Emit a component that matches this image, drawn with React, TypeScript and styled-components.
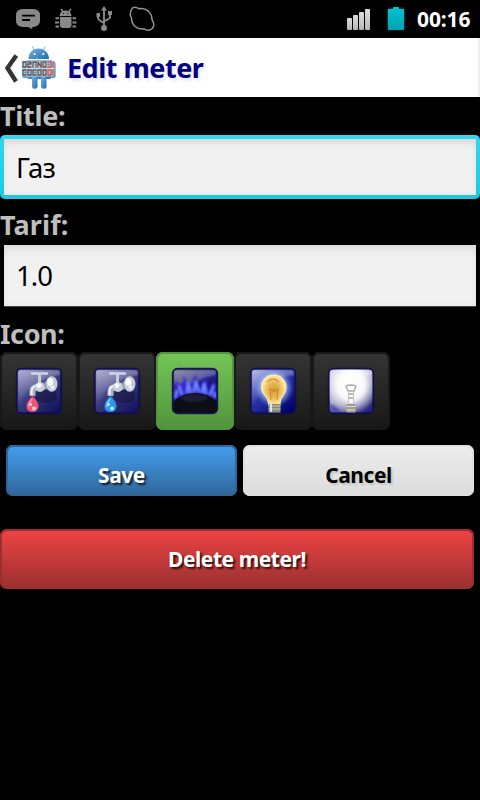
import React from "react";
import styled, { createGlobalStyle, css } from "styled-components";

const GlobalStyle = createGlobalStyle`
  * { box-sizing: border-box; }
  html, body { margin: 0; background: #000; }
  body { font-family: "Noto Sans", "Open Sans", sans-serif; overflow: hidden; }
`;

const Screen = styled.main`
  width: 480px;
  height: 800px;
  background: #000;
  display: flex;
  flex-direction: column;
  align-items: flex-start;
  overflow: hidden;
`;

const StatusBar = styled.header`
  width: 100%;
  height: 38px;
  flex: none;
  display: flex;
  justify-content: space-between;
`;

const StatusIcons = styled.svg`
  display: block;
  flex: none;
`;

const StatusRight = styled.div`
  display: flex;
  padding-right: 9px;
`;

const Clock = styled.time`
  font-size: 21px;
  font-weight: 700;
  line-height: 38px;
  color: #fff;
  width: 54px;
  letter-spacing: -0.1px;
  white-space: nowrap;
`;

const ActionBar = styled.div`
  width: 100%;
  height: 59px;
  flex: none;
  display: flex;
  background: linear-gradient(to right, #fff 478px, #f0f0f0 478px);
`;

const ActionTitle = styled.h1`
  margin: 0 0 0 5px;
  font-size: 27px;
  font-weight: 700;
  letter-spacing: -0.5px;
  line-height: 60px;
  color: #000080;
  text-shadow: 2px 3px 3px rgba(120, 120, 220, 0.18);
  white-space: nowrap;
`;

const Form = styled.form`
  width: 100%;
  display: flex;
  flex-direction: column;
`;

const FieldLabel = styled.label<{ $tracking?: number; $height?: number }>`
  height: ${(p) => p.$height ?? 38}px;
  font-size: 27px;
  font-weight: 700;
  letter-spacing: ${(p) => p.$tracking ?? 0}px;
  line-height: 38px;
  color: #bebebe;
  white-space: nowrap;
`;

const FieldFrame = styled.div<{ $focused?: boolean }>`
  height: 64px;
  padding: ${(p) => (p.$focused ? 4 : 1)}px 4px;
  margin-bottom: 7px;
  border-radius: 5px;
  background: ${(p) => (p.$focused ? "linear-gradient(#38d5ee, #18cbdd)" : "#000")};
`;

const FieldInput = styled.input<{ $tall?: boolean }>`
  display: block;
  width: 100%;
  height: ${(p) => (p.$tall ? 62 : 56)}px;
  border: 0;
  border-bottom: ${(p) => (p.$tall ? "1px solid #444" : "0")};
  border-radius: 0;
  outline: 0;
  padding: 0 12px;
  background: #f1f1f1;
  box-shadow: inset 0 8px 9px -5px rgba(0, 0, 0, 0.1), inset 0 0 7px rgba(0, 0, 0, 0.05);
  color: #000;
  font-family: "Noto Sans", sans-serif;
  font-size: 27.500px;
  letter-spacing: -0.9px;
`;

const IconRow = styled.div`
  display: flex;
  height: 78px;
`;

const surface = css`
  border: 0;
  border-radius: 7px;
  padding: 0;
`;

const Tile = styled.button<{ $selected?: boolean }>`
  ${surface}
  width: 78px;
  height: 78px;
  display: grid;
  place-items: center;
  background: ${(p) => (p.$selected ? "linear-gradient(#74c657, #51933c)" : "linear-gradient(#353535, #171717)")};
  box-shadow: inset 0 0 0 2px ${(p) => (p.$selected ? "#519440" : "#181818")};
`;

const Actions = styled.div`
  display: flex;
  gap: 6px;
  padding: 15px 6px 0;
`;

const tones = {
  blue: { fill: "linear-gradient(#449def, #2f6699)", edge: "#2f6699", text: "#fff", shadow: "rgba(0,0,0,.75)" },
  grey: { fill: "linear-gradient(#ededed, #dcdcdc)", edge: "#e0e0e0", text: "#000", shadow: "rgba(0,0,0,.12)" },
  red: { fill: "linear-gradient(#ef4444, #992f2f)", edge: "#992f2f", text: "#fff", shadow: "rgba(0,0,0,.75)" },
};

const Button = styled.button<{ $tone: keyof typeof tones; $wide?: boolean }>`
  ${surface}
  width: ${(p) => (p.$wide ? 474 : 231)}px;
  height: ${(p) => (p.$wide ? 60 : 51)}px;
  margin-top: ${(p) => (p.$wide ? 33 : 0)}px;
  padding: ${(p) => (p.$wide ? "0 0 1px" : "9px 0 0")};
  background: ${(p) => tones[p.$tone].fill};
  box-shadow: inset 0 0 0 2px ${(p) => tones[p.$tone].edge};
  color: ${(p) => tones[p.$tone].text};
  text-shadow: 2px 2px 2px ${(p) => tones[p.$tone].shadow};
  font: 700 21px "Noto Sans", sans-serif;
  letter-spacing: -0.45px;
  line-height: 30px;
`;

function NotificationIcons() {
  return (
    <StatusIcons width="170" height="38" viewBox="0 0 170 38">
      <g fill="#898989">
        <path d="M23 9h10q7 0 7 6.500v5q0 6.500-7.500 6.500L32 29l-4-2h-5q-7 0-7-6.500v-5Q16 9 23 9z" />
        <path d="M59.500 16q.5-5.500 6-5.500t6 5.500z" />
        <path d="M60 17h11.500v8q0 3-3 3H63q-3 0-3-3z" />
        <circle cx="104" cy="28" r="3" />
        <path d="M104 6l3 4.500h-6zM96.500 13h3.500v4h-3.500zM108 11h4v4h-4z" />
      </g>
      <path d="M22 15.700h13M22 20h8" stroke="#000" strokeWidth="1.800" />
      <path d="M63 13.500h1M67.500 13.500h1" stroke="#000" strokeWidth="1" />
      <g fill="none" stroke="#898989" strokeWidth="1.500">
        <path d="M63 12l-1.800-3M69 12l1.800-3" />
        <path d="M55.500 18.200h3.500M55 22.500h4M55.500 26.500h3.500M72.500 18.200H76M72.500 22.500h4M72.500 26.500H76" strokeWidth="2" />
        <path d="M104 9v18M98 16v2q0 2 6 5M110 14v3q0 2-6 4" strokeWidth="1.900" />
        <path d="M132 8.500c2-2.300 5-1 7 .2c7-1.500 13 4 13 11c2 3 2.500 6 .5 8.500c-2 2.700-6 2.500-8.500.7c-7 1-12.500-4-12.500-11c-2-3-1.500-6 .5-9.400z" strokeWidth="1.400" stroke="#999" />
      </g>
    </StatusIcons>
  );
}

function SystemIcons() {
  return (
    <StatusIcons width="77" height="38" viewBox="340 0 77 38">
      <defs>
        <linearGradient id="signal" x2="0" y2="1"><stop stopColor="#dedede" /><stop offset="1" stopColor="#b5b5b5" /></linearGradient>
        <linearGradient id="battery" x2="0" y2="1"><stop stopColor="#00c5d5" /><stop offset="1" stopColor="#00a2ae" /></linearGradient>
        <filter id="halo" x="-50%" y="-50%" width="200%" height="200%"><feGaussianBlur stdDeviation="1.300" /></filter>
      </defs>
      <g fill="url(#signal)">
        <rect x="347" y="18" width="5" height="12" rx="1" />
        <rect x="353" y="15" width="5" height="15" rx="1" />
        <rect x="359" y="12" width="5" height="18" rx="1" />
        <rect x="365" y="9" width="5" height="21" rx="1" />
      </g>
      <rect x="387" y="8" width="18" height="22" fill="#008b98" filter="url(#halo)" opacity=".4" />
      <path d="M389 9h4V8q0-1 1-1h4q1 0 1 1v1h4q1 0 1 1v19q0 1-1 1h-14q-1 0-1-1V10q0-1 1-1z" fill="url(#battery)" />
    </StatusIcons>
  );
}

function HomeButton() {
  const upper = "M23 67v-5h3v5zM28 62h3v2h-3v3h3M33 67v-5h3v5M38 67v-5l3 5v-5M43 62h3v5h-3zM48 62h3v5h-3M53 62v5";
  const lower = "M26 70h-3v5h3M28 70h3v5h-3zM36 70h-3v5h3M38 70h3v5h-3zM43 70h3v5h-3zM48 70h3v5h-3zM53 70v5";
  return (
    <StatusIcons width="62" height="59" viewBox="0 38 62 59">
      <defs>
        <linearGradient id="robot" x2="1" y2="1"><stop stopColor="#77b5e5" /><stop offset="1" stopColor="#1e6cae" /></linearGradient>
        <linearGradient id="digits" gradientUnits="userSpaceOnUse" x1="22" x2="55" y1="0" y2="0"><stop stopColor="#4b5056" /><stop offset=".72" stopColor="#5f5555" /><stop offset=".8" stopColor="#c7564f" /><stop offset="1" stopColor="#a44540" /></linearGradient>
        <filter id="robot-soft"><feGaussianBlur stdDeviation=".35" /></filter>
      </defs>
      <path d="M16.300 55.500L7.500 68L16 81.500" fill="none" stroke="#333" strokeWidth="4.400" />
      <g filter="url(#robot-soft)">
        <g fill="url(#robot)">
          <path d="M28.500 59c0-6 4-10.500 10-10.500S49 53 49 59z" />
          <path d="M26 60h26v15q0 4-3 4H29q-3 0-3-4z" />
          <rect x="22" y="61" width="5" height="17" rx="2.500" />
          <rect x="50.500" y="61" width="5" height="17" rx="2.500" />
          <rect x="32" y="76" width="5.500" height="12.700" rx="2.500" />
          <rect x="41" y="76" width="5.500" height="12.700" rx="2.500" />
        </g>
        <path d="M34 50l-1.500-3.500M43.500 50l1.500-3.500" stroke="#8ec5ec" strokeWidth="1.200" />
        <circle cx="34.500" cy="54" r="1.100" fill="#fff" /><circle cx="43.300" cy="54" r="1.100" fill="#fff" />
        <g fill="none" strokeLinecap="square">
          <path d={upper + lower} stroke="#e3e5e8" strokeWidth="2.800" opacity=".85" />
          <path d={upper + lower} stroke="url(#digits)" strokeWidth="1.300" />
        </g>
      </g>
    </StatusIcons>
  );
}

type MeterKind = "hot" | "cold" | "gas" | "bulb" | "lamp";

function Faucet({ hot }: { hot: boolean }) {
  return (
    <g>
      <ellipse cx="31" cy="29" rx="11" ry="7" fill="#10103a" opacity=".55" />
      <path d="M17 6.500h15" stroke="#e8e8ef" strokeWidth="2.300" strokeLinecap="round" opacity=".8" />
      <path d="M24.500 6v13" stroke="#c9cfda" strokeWidth="3" />
      <path d="M17.500 29v-4q0-5.500 7-5.500h7" fill="none" stroke="#a9b2c0" strokeWidth="6" />
      <path d="M16.500 28v-4q0-5 6-5" fill="none" stroke="#e7ebf1" strokeWidth="2.500" />
      <circle cx="25" cy="20" r="5" fill="#c6ced8" /><circle cx="24" cy="18.500" r="2.500" fill="#f7f9fb" />
      <path d="M29 15l4-1 1 6-4 1z" fill="#8795a8" />
      <ellipse cx="36.700" cy="17" rx="5.800" ry="7.800" fill="#c4ccd6" />
      <ellipse cx="35.300" cy="15" rx="3" ry="4" fill="#fff" opacity=".95" />
      <circle cx="37.500" cy="20.500" r="2" fill="#edf1f4" />
      <path d="M17.500 29q-6 6-6 10.500a6 5.500 0 0 0 12 0q0-4.500-6-10.500z" fill={hot ? "#ec5476" : "#2f96ed"} />
      <path d="M17.300 32q-4 4-3 8" stroke={hot ? "#f986a0" : "#74c7ff"} strokeWidth="2" fill="none" />
      <circle cx="19" cy="41.500" r="2" fill={hot ? "#ffd3d9" : "#a7efff"} />
      <circle cx="15.800" cy="37.500" r="1.200" fill="#fff" opacity=".85" />
    </g>
  );
}

function MeterIcon({ kind }: { kind: MeterKind }) {
  const id = (name: string) => `${kind}-${name}`;
  const stops = {
    hot: ["#9292c4", "#3b3b80", "#14145c"],
    cold: ["#9292c4", "#3b3b80", "#14145c"],
    gas: ["#606078", "#20208b", "#080816"],
    bulb: ["#9d9de2", "#2930a1", "#00006d"],
    lamp: ["#b8b8df", "#9d9dbd", "#222276"],
  }[kind];
  return (
    <svg width="48" height="48" viewBox="0 0 48 48">
      <defs>
        <linearGradient id={id("bg")} x1="0" y1="0" x2=".85" y2="1">
          <stop stopColor={stops[0]} /><stop offset=".5" stopColor={stops[1]} /><stop offset="1" stopColor={stops[2]} />
        </linearGradient>
        <radialGradient id={id("glow")}>
          <stop stopColor="#fff" /><stop offset=".5" stopColor="#fff" stopOpacity={kind === "lamp" ? 0.95 : 0.8} />
          <stop offset="1" stopColor={kind === "lamp" ? "#fff" : "#3c8cff"} stopOpacity="0" />
        </radialGradient>
        <radialGradient id={id("glass")}>
          <stop stopColor="#d59a31" /><stop offset=".5" stopColor="#e9b854" /><stop offset="1" stopColor="#ffe9a5" />
        </radialGradient>
        <linearGradient id={id("sheen")} x2="0" y2="1"><stop stopColor="#fff" stopOpacity=".5" /><stop offset="1" stopColor="#fff" stopOpacity="0" /></linearGradient>
        <filter id={id("soft")}><feGaussianBlur stdDeviation=".8" /></filter>
        <filter id={id("art")} x="-20%" y="-20%" width="140%" height="140%"><feGaussianBlur stdDeviation=".45" /></filter>
        <clipPath id={id("clip")}><rect x="2.500" y="2.500" width="43" height="43" rx="4" /></clipPath>
      </defs>
      <rect x=".8" y=".8" width="46.400" height="46.400" rx="6" fill="#10163c" opacity=".8" filter={`url(#${id("art")})`} />
      <rect x="2" y="2" width="44" height="44" rx="4" fill={`url(#${id("bg")})`} stroke="#10104e" strokeWidth="1.500" />
      <g clipPath={`url(#${id("clip")})`}>
        <path d="M3 3h42v5Q16 13 4 38H3z" fill={`url(#${id("sheen")})`} opacity=".65" filter={`url(#${id("soft")})`} />
        <g filter={`url(#${id("art")})`}>
          {(kind === "hot" || kind === "cold") && <Faucet hot={kind === "hot"} />}
          {kind === "gas" && (
            <>
              <path d="M2 17h44v20H2z" fill="#2010a8" opacity=".75" filter={`url(#${id("soft")})`} />
              <g filter={`url(#${id("soft")})`}>
                <path d="M3 31L5 12l5 13 3-16 6 13 5-15 5 15 6-13 3 16 5-13 2 19H3z" fill="#3c20d6" opacity=".85" />
                <path d="M4 31l2-8M11 28l-3-10M16 26l1-11 3 11M23 25l2-11 3 11M31 26l2-10 2 11M39 28l4-10M44 31v-6" fill="none" stroke="#6f8cff" strokeWidth="2.400" />
              </g>
              <path d="M2 46V36q7-10 22-10t22 10v10z" fill="#070714" />
              <ellipse cx="23" cy="31" rx="14" ry="4" fill="#555579" opacity=".3" filter={`url(#${id("soft")})`} />
            </>
          )}
          {kind === "bulb" && (
            <>
              <circle cx="25" cy="21" r="20" fill={`url(#${id("glow")})`} />
              <path d="M25 8c-8 0-12.500 5.500-12.500 12 0 8 7 9 7 18h11.500c0-9 6-10 6-18 0-7-5-12-12-12z" fill={`url(#${id("glass")})`} stroke="#fff0b8" strokeWidth="1" />
              <path d="M22 33l-1-11 4 2 4-2-1 11M18 15q6-6 12 0" fill="none" stroke="#bc761c" strokeWidth="1.200" opacity=".6" />
              <path d="M19.500 37h12v9h-12z" fill="#8b8b7b" />
              <path d="M19.500 39h12M19.500 42h12" stroke="#c9c9bd" />
              <path d="M22 37v8" stroke="#fff" strokeWidth="2" opacity=".7" />
            </>
          )}
          {kind === "lamp" && (
            <>
              <ellipse cx="24" cy="18" rx="27" ry="29" fill={`url(#${id("glow")})`} />
              <path d="M18 19h12l-3 17h-6z" fill="#fff" />
              <path d="M19 19q5-2 10 0l-2 5h-6zM21.500 27h5M21.500 31h5" fill="none" stroke="#a6a6a6" strokeWidth="1.300" />
              <path d="M21.500 24v12M26.500 24v12" stroke="#c4c4c4" strokeWidth="1.200" />
              <path d="M19.500 37h9v9h-9z" fill="#9d9d91" /><path d="M19.500 39.500h9M19.500 43h9" stroke="#e3e1cf" />
              <path d="M2 37q8 1 12 9H2z" fill="#2424a0" opacity=".5" filter={`url(#${id("soft")})`} />
            </>
          )}
        </g>
      </g>
    </svg>
  );
}

const meters: MeterKind[] = ["hot", "cold", "gas", "bulb", "lamp"];

export default function App() {
  return (
    <>
      <GlobalStyle />
      <Screen>
        <StatusBar>
          <NotificationIcons />
          <StatusRight><SystemIcons /><Clock>00:16</Clock></StatusRight>
        </StatusBar>
        <ActionBar><HomeButton /><ActionTitle>Edit meter</ActionTitle></ActionBar>
        <Form onSubmit={(e) => e.preventDefault()}>
          <FieldLabel htmlFor="title" $tracking={-0.3}>Title:</FieldLabel>
          <FieldFrame $focused><FieldInput id="title" defaultValue="Газ" /></FieldFrame>
          <FieldLabel htmlFor="tarif" $tracking={0.1}>Tarif:</FieldLabel>
          <FieldFrame><FieldInput id="tarif" $tall defaultValue="1.0" /></FieldFrame>
          <FieldLabel as="div" $tracking={-0.4} $height={37}>Icon:</FieldLabel>
          <IconRow>
            {meters.map((kind) => <Tile key={kind} type="button" $selected={kind === "gas"}><MeterIcon kind={kind} /></Tile>)}
          </IconRow>
          <Actions>
            <Button $tone="blue">Save</Button>
            <Button $tone="grey" type="button">Cancel</Button>
          </Actions>
          <Button $tone="red" $wide type="button">Delete meter!</Button>
        </Form>
      </Screen>
    </>
  );
}
